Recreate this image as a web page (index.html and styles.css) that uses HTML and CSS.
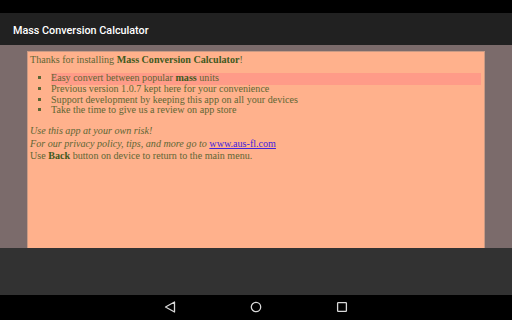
FILE: index.html
```html
<!DOCTYPE html>
<html lang="en">
<head>
    <meta charset="UTF-8">
    <meta name="viewport" content="width=device-width, initial-scale=1.0">
    <title>Mass Conversion Calculator</title>
    <link rel="stylesheet" href="styles.css">
</head>
<body>

    <div class="status-bar"></div>

    <div class="toolbar">
        <span class="title">Mass Conversion Calculator</span>
    </div>

    <div class="content">
        <div class="panel">
            <p>Thanks for installing <b>Mass Conversion Calculator</b>!</p>
            <ul>
                <li class="hl">Easy convert between popular <b>mass</b> units</li>
                <li>Previous version 1.0.7 kept here for your convenience</li>
                <li>Support development by keeping this app on all your devices</li>
                <li>Take the time to give us a review on app store</li>
            </ul>
            <p class="note">
                <i>Use this app at your own risk!</i><br>
                <i>For our privacy policy, tips, and more go to</i> <a href="#">www.aus-fl.com</a>
            </p>
            <p class="back">Use <b>Back</b> button on device to return to the main menu.</p>
        </div>
    </div>

    <div class="bottom-bar"></div>

    <div class="nav-bar">
        <svg class="nav-icon" width="20" height="20" viewBox="0 0 20 20">
            <path d="M14.5 5 L5.5 10 L14.5 15 Z" fill="none" stroke="#d8d8d8" stroke-width="1.3" stroke-linejoin="round"/>
        </svg>
        <svg class="nav-icon" width="20" height="20" viewBox="0 0 20 20">
            <circle cx="10" cy="10" r="4.7" fill="none" stroke="#d8d8d8" stroke-width="1.3"/>
        </svg>
        <svg class="nav-icon" width="20" height="20" viewBox="0 0 20 20">
            <rect x="5.6" y="5.6" width="8.8" height="8.8" rx="0.6" fill="none" stroke="#d8d8d8" stroke-width="1.3"/>
        </svg>
    </div>

</body>
</html>
```

FILE: styles.css
```css
body {
    margin: 0;
    width: 512px;
    height: 320px;
    display: flex;
    flex-direction: column;
    background: #000;
    overflow: hidden;
}

.status-bar {
    height: 13px;
    background: #000;
}

.toolbar {
    height: 30px;
    background: #212121;
    display: flex;
    align-items: center;
    padding: 3px 0 0 13px;
}

.title {
    font-family: Roboto, "Liberation Sans", sans-serif;
    font-weight: 500;
    font-size: 10.8px;
    color: #fff;
}

.content {
    height: 201px;
    background: #7b6b6b;
    padding: 6px 27px 0 27px;
    display: flex;
}

.panel {
    flex: 1;
    background: #ffb18c;
    border: 1px solid #c99a84;
    border-bottom: none;
    padding: 3px 3px 0 2px;
    font-family: "Liberation Serif", serif;
    font-size: 10.1px;
    line-height: 10.7px;
    color: #5e6634;
}

.panel p {
    margin: 0;
}

.panel b {
    color: #3f5a1e;
}

ul {
    list-style: square;
    margin: 7.3px 0 8px 0;
    padding-left: 21px;
}

li.hl {
    background: #ff9b88;
    margin: -0.7px 0;
    padding: 0.7px 0;
}

.panel .note {
    line-height: 13px;
}

.note a {
    color: #4422dd;
}

.panel .back {
    margin-top: 1px;
}

.bottom-bar {
    height: 47px;
    background: #323232;
}

.nav-bar {
    height: 26px;
    background: #000;
    display: flex;
    justify-content: center;
    align-items: center;
    gap: 66px;
}
```
